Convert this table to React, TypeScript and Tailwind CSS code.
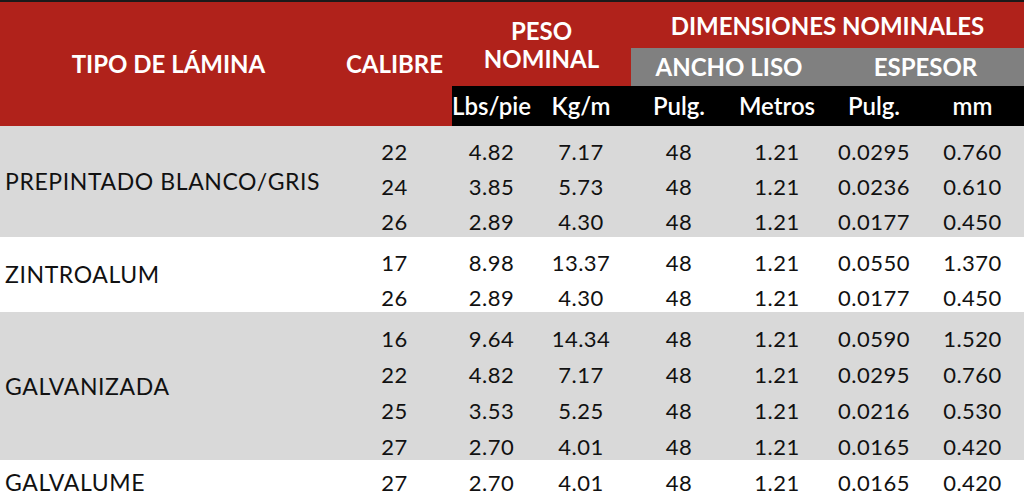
import React from "react";

type Group = {
    name: string;
    bg: string;
    height: string;
    pad: string;
    rowH: string;
    rows: string[][];
};

const groups: Group[] = [
    {
        name: "PREPINTADO BLANCO/GRIS",
        bg: "bg-[#d9d9d9]",
        height: "h-[111px]",
        pad: "pt-[8px]",
        rowH: "h-[35px]",
        rows: [
            ["22", "4.82", "7.17", "48", "1.21", "0.0295", "0.760"],
            ["24", "3.85", "5.73", "48", "1.21", "0.0236", "0.610"],
            ["26", "2.89", "4.30", "48", "1.21", "0.0177", "0.450"],
        ],
    },
    {
        name: "ZINTROALUM",
        bg: "bg-white",
        height: "h-[75px]",
        pad: "pt-[8px]",
        rowH: "h-[35px]",
        rows: [
            ["17", "8.98", "13.37", "48", "1.21", "0.0550", "1.370"],
            ["26", "2.89", "4.30", "48", "1.21", "0.0177", "0.450"],
        ],
    },
    {
        name: "GALVANIZADA",
        bg: "bg-[#d9d9d9]",
        height: "h-[148px]",
        pad: "pt-[8px]",
        rowH: "h-[36px]",
        rows: [
            ["16", "9.64", "14.34", "48", "1.21", "0.0590", "1.520"],
            ["22", "4.82", "7.17", "48", "1.21", "0.0295", "0.760"],
            ["25", "3.53", "5.25", "48", "1.21", "0.0216", "0.530"],
            ["27", "2.70", "4.01", "48", "1.21", "0.0165", "0.420"],
        ],
    },
    {
        name: "GALVALUME",
        bg: "bg-white",
        height: "h-[44px]",
        pad: "pt-[4px]",
        rowH: "h-[36px]",
        rows: [["27", "2.70", "4.01", "48", "1.21", "0.0165", "0.420"]],
    },
];

const subHeads = ["Lbs/pie", "Kg/m", "Pulg.", "Metros", "Pulg.", "mm"];

export default function App() {
    return (
        <div className="w-[1024px] h-[499px] overflow-hidden bg-white font-['Lato',sans-serif]">
            {/* Header */}
            <div className="grid grid-cols-[337px_115px_79px_100px_96px_100px_94px_103px] grid-rows-[46px_38px_40px] border-t-2 border-[#1a1a1a] bg-[#b0221b] text-white font-bold text-[24px]">
                <div className="row-span-3 flex items-center justify-center">TIPO DE LÁMINA</div>
                <div className="row-span-3 flex items-center justify-center">CALIBRE</div>
                <div className="col-span-2 row-span-2 flex flex-col items-center justify-center leading-[28px] pt-[2px]">
                    <span>PESO</span>
                    <span>NOMINAL</span>
                </div>
                <div className="col-span-4 flex items-center justify-center pt-[1px]">DIMENSIONES NOMINALES</div>
                <div className="col-span-2 flex items-center justify-center bg-[#808080]">ANCHO LISO</div>
                <div className="col-span-2 flex items-center justify-center bg-[#808080]">ESPESOR</div>
                {subHeads.map((h, i) => (
                    <div key={i} className="flex items-center justify-center bg-black font-semibold">
                        {h}
                    </div>
                ))}
            </div>

            {/* Body */}
            {groups.map((g) => (
                <div key={g.name} className={`flex ${g.bg} ${g.height} text-[#111]`}>
                    <div className="w-[337px] shrink-0 flex items-center pl-[5px] text-[23px] tracking-[0.6px]">{g.name}</div>
                    <div className={`flex-1 ${g.pad}`}>
                        {g.rows.map((r, i) => (
                            <div key={i} className={`grid grid-cols-[115px_79px_100px_96px_100px_94px_103px] items-center text-center text-[22px] tracking-[0.5px] ${g.rowH}`}>
                                {r.map((v, j) => (
                                    <div key={j}>{v}</div>
                                ))}
                            </div>
                        ))}
                    </div>
                </div>
            ))}
        </div>
    );
}
